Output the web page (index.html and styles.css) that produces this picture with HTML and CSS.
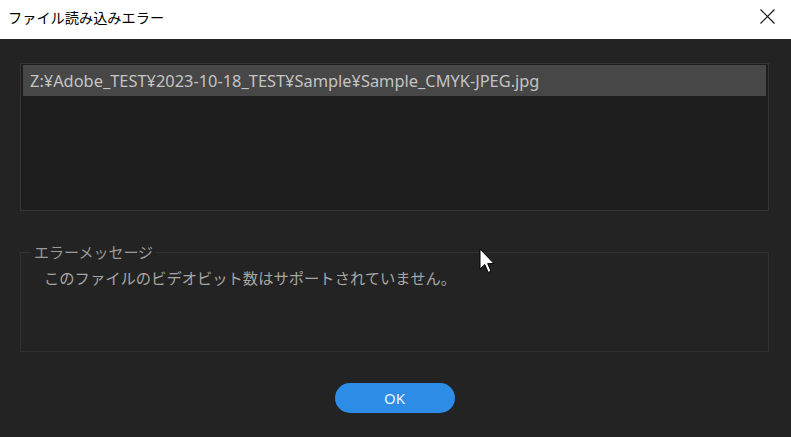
FILE: index.html
```html
<!DOCTYPE html>
<html lang="ja">
<head>
    <meta charset="UTF-8">
    <title>ファイル読み込みエラー</title>
    <link rel="stylesheet" href="styles.css">
</head>
<body>
    <div class="titlebar">
        <span class="title">ファイル読み込みエラー</span>
        <svg class="close" width="15" height="15" viewBox="0 0 15 15">
            <path d="M0.5 0.5 L14.5 14.5 M14.5 0.5 L0.5 14.5" stroke="#111" stroke-width="1.1" fill="none"/>
        </svg>
    </div>

    <div class="dialog">
        <div class="file-list">
            <div class="row selected">Z:¥Adobe_TEST¥2023-10-18_TEST¥Sample¥Sample_CMYK-JPEG.jpg</div>
        </div>

        <fieldset class="group">
            <legend>エラーメッセージ</legend>
            <div class="message">このファイルのビデオビット数はサポートされていません。</div>
        </fieldset>

        <div class="buttons">
            <button class="ok">OK</button>
        </div>
    </div>

    <!-- マウスカーソル -->
    <svg class="cursor" width="17" height="26" viewBox="0 0 17 26">
        <path d="M1 1 L1 21 L5.8 16.6 L9.2 24.4 L12 23.2 L8.7 15.6 L15 15.6 Z" fill="#fff" stroke="#000" stroke-width="1"/>
    </svg>
</body>
</html>
```

FILE: styles.css
```css
body {
    margin: 0;
    background-color: #232323;
    font-family: "Noto Sans", "Noto Sans CJK JP", sans-serif;
    overflow: hidden;
}

.titlebar {
    height: 39px;
    background-color: #ffffff;
    display: flex;
    justify-content: space-between;
    align-items: flex-start;
    padding: 6px 16px 0 8px;
    box-sizing: border-box;
}

.title {
    font-family: "Noto Sans CJK JP", sans-serif;
    font-size: 14.2px;
    line-height: 22px;
    color: #000;
}

.close {
    margin-top: 3px;
}

.dialog {
    padding: 24px 22px 0 20px;
}

.file-list {
    height: 148px;
    background-color: #1e1e1e;
    border: 1px solid #353535;
    padding: 1px 2px;
    box-sizing: border-box;
}

.row {
    height: 31px;
    line-height: 31px;
    padding-left: 7px;
    font-size: 16.4px;
    color: #c4c4c4;
    white-space: nowrap;
}

.row.selected {
    background-color: #474747;
}

.group {
    margin: 31px 0 0 0;
    height: 110px;
    box-sizing: border-box;
    border: 1px solid #303030;
    padding: 0 0 0 10px;
}

.group legend {
    font-family: "Noto Sans CJK JP", sans-serif;
    font-size: 15px;
    line-height: 20px;
    color: #9a9a9a;
    padding: 0 3px;
}

.message {
    font-family: "Noto Sans CJK JP", sans-serif;
    font-size: 15.3px;
    color: #a6a6a6;
    padding: 4px 0 0 13px;
}

.buttons {
    display: flex;
    justify-content: center;
    padding-top: 31px;
}

.ok {
    width: 120px;
    height: 30px;
    border: none;
    border-radius: 15px;
    background-color: #2d8ce6;
    color: #eef5ff;
    font-family: "Noto Sans", sans-serif;
    font-size: 15px;
    cursor: pointer;
}

.cursor {
    position: absolute;
    left: 479px;
    top: 248px;
}
```
